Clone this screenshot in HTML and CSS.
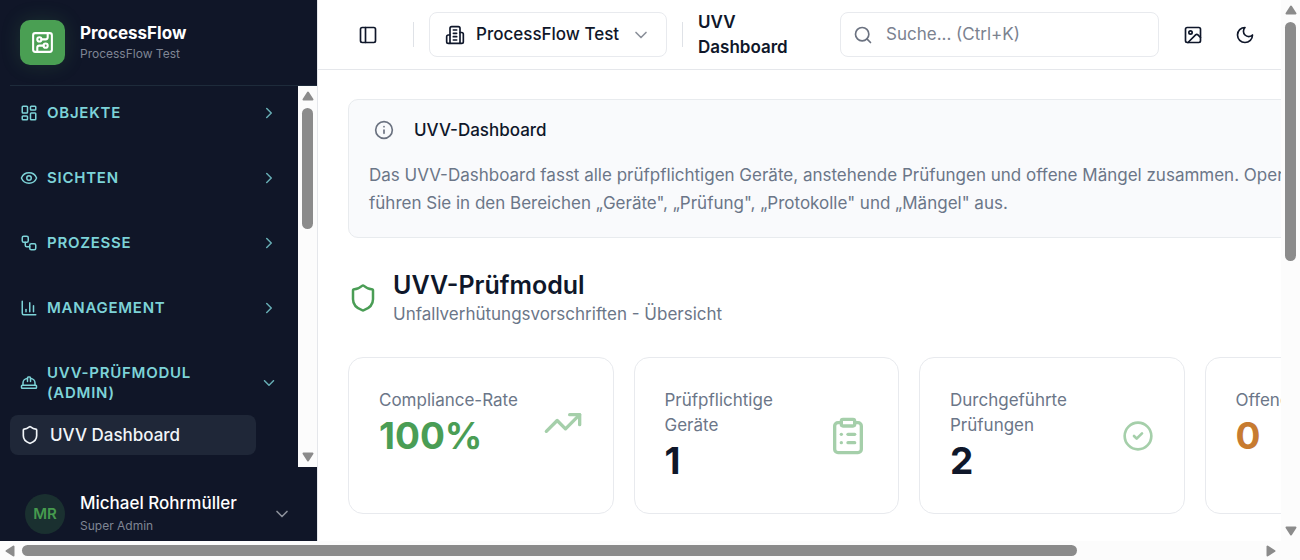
FILE: index.html
```
<!DOCTYPE html>
<html lang="de">
<head>
    <meta charset="UTF-8">
    <title>UVV Dashboard - ProcessFlow</title>
    <link rel="stylesheet" href="styles.css">
</head>
<body>
<div class="window">
    <div class="viewport">
        <div class="app">
            <aside class="sidebar">
                <div class="brand">
                    <div class="brand-logo">
                        <svg class="icon icon-lg" viewBox="0 0 24 24"><rect x="3" y="3" width="18" height="18" rx="2"/><path d="M11 9h4a2 2 0 0 0 2-2V3"/><circle cx="9" cy="9" r="2"/><path d="M7 21v-4a2 2 0 0 1 2-2h4"/><circle cx="15" cy="15" r="2"/></svg>
                    </div>
                    <div>
                        <div class="brand-name">ProcessFlow</div>
                        <div class="small">ProcessFlow Test</div>
                    </div>
                </div>

                <div class="nav-scroll">
                    <nav class="nav">
                        <button class="nav-group">
                            <svg class="icon" viewBox="0 0 24 24"><rect x="3" y="3" width="7" height="9" rx="1"/><rect x="14" y="3" width="7" height="5" rx="1"/><rect x="14" y="12" width="7" height="9" rx="1"/><rect x="3" y="16" width="7" height="5" rx="1"/></svg>
                            <span>Objekte</span>
                            <svg class="icon chevron" viewBox="0 0 24 24"><path d="m9 18 6-6-6-6"/></svg>
                        </button>
                        <button class="nav-group">
                            <svg class="icon" viewBox="0 0 24 24"><path d="M2.06 12.35a1 1 0 0 1 0-.7 10.75 10.75 0 0 1 19.88 0 1 1 0 0 1 0 .7 10.75 10.75 0 0 1-19.88 0"/><circle cx="12" cy="12" r="3"/></svg>
                            <span>Sichten</span>
                            <svg class="icon chevron" viewBox="0 0 24 24"><path d="m9 18 6-6-6-6"/></svg>
                        </button>
                        <button class="nav-group">
                            <svg class="icon" viewBox="0 0 24 24"><rect x="3" y="3" width="8" height="8" rx="2"/><path d="M7 11v4a2 2 0 0 0 2 2h4"/><rect x="13" y="13" width="8" height="8" rx="2"/></svg>
                            <span>Prozesse</span>
                            <svg class="icon chevron" viewBox="0 0 24 24"><path d="m9 18 6-6-6-6"/></svg>
                        </button>
                        <button class="nav-group">
                            <svg class="icon" viewBox="0 0 24 24"><path d="M3 3v16a2 2 0 0 0 2 2h16"/><path d="M18 17V9"/><path d="M13 17V5"/><path d="M8 17v-3"/></svg>
                            <span>Management</span>
                            <svg class="icon chevron" viewBox="0 0 24 24"><path d="m9 18 6-6-6-6"/></svg>
                        </button>
                        <div>
                            <button class="nav-group">
                                <svg class="icon" viewBox="0 0 24 24"><path d="M10 10V5a1 1 0 0 1 1-1h2a1 1 0 0 1 1 1v5"/><path d="M14 6a6 6 0 0 1 6 6v3"/><path d="M4 15v-3a6 6 0 0 1 6-6"/><rect x="2" y="15" width="20" height="4" rx="1"/></svg>
                                <span>UVV-Prüfmodul (Admin)</span>
                                <svg class="icon chevron" viewBox="0 0 24 24"><path d="m6 9 6 6 6-6"/></svg>
                            </button>
                            <a href="#" class="nav-item active">
                                <svg class="icon icon-md" viewBox="0 0 24 24"><path d="M20 13c0 5-3.500 7.500-7.660 8.950a1 1 0 0 1-.67-.01C7.500 20.500 4 18 4 13V6a1 1 0 0 1 1-1c2 0 4.500-1.200 6.240-2.720a1.170 1.170 0 0 1 1.520 0C14.510 3.810 17 5 19 5a1 1 0 0 1 1 1z"/></svg>
                                UVV Dashboard
                            </a>
                        </div>
                    </nav>
                    <div class="scrollbar">
                        <svg class="arrow" viewBox="0 0 12 12"><path d="M6 2.500 10.500 9.500h-9z"/></svg>
                        <div class="track"><div class="thumb" style="height: 36%"></div></div>
                        <svg class="arrow" viewBox="0 0 12 12"><path d="M6 9.500 10.500 2.500h-9z"/></svg>
                    </div>
                </div>

                <button class="user">
                    <span class="avatar">MR</span>
                    <span class="user-text">
                        <span class="user-name">Michael Rohrmüller</span>
                        <span class="small">Super Admin</span>
                    </span>
                    <svg class="icon icon-md" viewBox="0 0 24 24"><path d="m6 9 6 6 6-6"/></svg>
                </button>
            </aside>

            <div class="main">
                <header class="topbar">
                    <button class="icon-btn toggle" aria-label="Sidebar umschalten">
                        <svg class="icon icon-md" viewBox="0 0 24 24"><rect x="3" y="3" width="18" height="18" rx="2"/><path d="M9 3v18"/></svg>
                    </button>
                    <div class="divider divider-first"></div>
                    <div class="tenant">
                        <svg class="icon icon-md" viewBox="0 0 24 24"><path d="M6 22V4a2 2 0 0 1 2-2h8a2 2 0 0 1 2 2v18Z"/><path d="M6 12H4a2 2 0 0 0-2 2v6a2 2 0 0 0 2 2h2"/><path d="M18 9h2a2 2 0 0 1 2 2v9a2 2 0 0 1-2 2h-2"/><path d="M10 6h4"/><path d="M10 10h4"/><path d="M10 14h4"/><path d="M10 18h4"/></svg>
                        <select aria-label="Mandant">
                            <option>ProcessFlow Test</option>
                        </select>
                        <svg class="icon icon-md muted" viewBox="0 0 24 24"><path d="m6 9 6 6 6-6"/></svg>
                    </div>
                    <div class="divider"></div>
                    <div class="page-title">UVV Dashboard</div>
                    <label class="search">
                        <svg class="icon icon-md" viewBox="0 0 24 24"><circle cx="11" cy="11" r="8"/><path d="m21 21-4.300-4.300"/></svg>
                        <input type="text" placeholder="Suche... (Ctrl+K)" aria-label="Suche">
                    </label>
                    <button class="icon-btn" aria-label="Hintergrund">
                        <svg class="icon icon-md" viewBox="0 0 24 24"><rect x="3" y="3" width="18" height="18" rx="2"/><circle cx="9" cy="9" r="2"/><path d="m21 15-3.090-3.090a2 2 0 0 0-2.820 0L6 21"/></svg>
                    </button>
                    <button class="icon-btn" aria-label="Dunkles Design">
                        <svg class="icon icon-md" viewBox="0 0 24 24"><path d="M12 3a6 6 0 0 0 9 9 9 9 0 1 1-9-9Z"/></svg>
                    </button>
                </header>

                <main class="content">
                    <section class="notice">
                        <div class="notice-head">
                            <svg class="icon icon-md" viewBox="0 0 24 24"><circle cx="12" cy="12" r="10"/><path d="M12 16v-4"/><path d="M12 8h.01"/></svg>
                            UVV-Dashboard
                        </div>
                        <p>Das UVV-Dashboard fasst alle prüfpflichtigen Geräte, anstehende Prüfungen und offene Mängel zusammen. Operative Maßnahmen führen Sie in den Bereichen „Geräte", „Prüfung", „Protokolle" und „Mängel" aus.</p>
                    </section>

                    <div class="module">
                        <svg class="icon green" viewBox="0 0 24 24"><path d="M20 13c0 5-3.500 7.500-7.660 8.950a1 1 0 0 1-.67-.01C7.500 20.500 4 18 4 13V6a1 1 0 0 1 1-1c2 0 4.500-1.200 6.240-2.720a1.170 1.170 0 0 1 1.520 0C14.510 3.810 17 5 19 5a1 1 0 0 1 1 1z"/></svg>
                        <div>
                            <h1>UVV-Prüfmodul</h1>
                            <p>Unfallverhütungsvorschriften - Übersicht</p>
                        </div>
                    </div>

                    <div class="cards">
                        <div class="card">
                            <div class="card-row">
                                <div>
                                    <div class="card-label">Compliance-Rate</div>
                                    <div class="card-value green">100%</div>
                                </div>
                                <svg class="icon card-icon" viewBox="0 0 24 24"><path d="M22 7 13.500 15.500l-5-5L2 17"/><path d="M16 7h6v6"/></svg>
                            </div>
                        </div>
                        <div class="card">
                            <div class="card-row">
                                <div>
                                    <div class="card-label">Prüfpflichtige Geräte</div>
                                    <div class="card-value">1</div>
                                </div>
                                <svg class="icon card-icon" viewBox="0 0 24 24"><rect x="8" y="2" width="8" height="4" rx="1"/><path d="M16 4h2a2 2 0 0 1 2 2v14a2 2 0 0 1-2 2H6a2 2 0 0 1-2-2V6a2 2 0 0 1 2-2h2"/><path d="M12 11h4"/><path d="M12 16h4"/><path d="M8 11h.01"/><path d="M8 16h.01"/></svg>
                            </div>
                        </div>
                        <div class="card">
                            <div class="card-row">
                                <div>
                                    <div class="card-label">Durchgeführte Prüfungen</div>
                                    <div class="card-value">2</div>
                                </div>
                                <svg class="icon card-icon card-icon-sm" viewBox="0 0 24 24"><circle cx="12" cy="12" r="10"/><path d="m9 12 2 2 4-4"/></svg>
                            </div>
                        </div>
                        <div class="card">
                            <div class="card-row">
                                <div>
                                    <div class="card-label">Offene Mängel</div>
                                    <div class="card-value orange">0</div>
                                </div>
                            </div>
                        </div>
                    </div>
                </main>
            </div>
        </div>
    </div>

    <div class="scrollbar">
        <svg class="arrow" viewBox="0 0 12 12"><path d="M6 2.500 10.500 9.500h-9z"/></svg>
        <div class="track"><div class="thumb" style="height: 48%"></div></div>
        <svg class="arrow" viewBox="0 0 12 12"><path d="M6 9.500 10.500 2.500h-9z"/></svg>
    </div>
    <div class="scrollbar horizontal">
        <svg class="arrow" viewBox="0 0 12 12"><path d="M2.500 6 9.500 1.500v9z"/></svg>
        <div class="track"><div class="thumb" style="width: 85.300%"></div></div>
        <svg class="arrow" viewBox="0 0 12 12"><path d="M9.500 6 2.500 1.500v9z"/></svg>
    </div>
</div>
</body>
</html>
```
FILE: styles.css
```
* {
    box-sizing: border-box;
}

html, body {
    height: 100%;
    margin: 0;
    padding: 0;
}

body {
    font-family: Inter, "Liberation Sans", sans-serif;
    font-size: 17px;
    line-height: 25px;
    color: #0f172a;
    background: #fff;
}

button, input, select {
    font: inherit;
    color: inherit;
    border: none;
    background: none;
    padding: 0;
    margin: 0;
}

button {
    cursor: pointer;
    text-align: left;
}

h1, p {
    margin: 0;
}

/* window with its scrollbars */
.window {
    display: grid;
    grid-template-columns: minmax(0, 1fr) 19px;
    grid-template-rows: minmax(0, 1fr) 19px;
    height: 100vh;
    background: #fcfcfc;
}

.viewport {
    overflow: hidden;
    background: #fff;
}

.app {
    display: flex;
    min-width: 1500px;
    height: 100%;
}

.scrollbar {
    display: flex;
    flex-direction: column;
    align-items: center;
    flex: none;
    width: 19px;
    padding: 4px 0;
    gap: 6px;
    background: #fcfcfc;
}

.scrollbar.horizontal {
    flex-direction: row;
    width: auto;
    padding: 0 4px;
}

.arrow {
    width: 12px;
    height: 12px;
    flex: none;
    fill: #8b8b8b;
    stroke: #8b8b8b;
    stroke-width: 2;
    stroke-linejoin: round;
}

.track {
    flex: 1;
    width: 11px;
}

.thumb {
    height: 11px;
    border-radius: 6px;
    background: #8b8b8b;
}

/* icons */
.icon {
    width: 18px;
    height: 18px;
    flex: none;
    fill: none;
    stroke: currentColor;
    stroke-width: 2;
    stroke-linecap: round;
    stroke-linejoin: round;
}

.icon-md {
    width: 20px;
    height: 20px;
}

.icon-lg {
    width: 25px;
    height: 25px;
}

.muted {
    color: #8b909a;
}

.green {
    color: #4a9d55;
}

.orange {
    color: #c77b30;
}

/* sidebar */
.sidebar {
    display: flex;
    flex-direction: column;
    width: 318px;
    flex: none;
    color: #fff;
    background: #101628;
    border-right: 1px solid #e5e7eb;
}

.brand {
    display: flex;
    align-items: center;
    gap: 15px;
    height: 86px;
    margin-left: 10px;
    padding-left: 10px;
    border-bottom: 1px solid #1e2b3b;
}

.brand-logo {
    display: flex;
    align-items: center;
    justify-content: center;
    width: 45px;
    height: 45px;
    border-radius: 10px;
    background: #4a9f53;
    box-shadow: 0 0 20px rgba(74, 159, 83, 0.2);
}

.brand-name {
    font-weight: 700;
    line-height: 22px;
}

.small {
    font-size: 12px;
    line-height: 20px;
    color: #7f8594;
}

.nav-scroll {
    display: flex;
    flex: 1;
    min-height: 0;
}

.nav {
    display: flex;
    flex-direction: column;
    gap: 25px;
    flex: 1;
    padding: 7px 10px 0;
}

.nav-group {
    display: flex;
    align-items: center;
    gap: 9px;
    width: 100%;
    padding: 10px;
    font-size: 15px;
    font-weight: 600;
    line-height: 20px;
    letter-spacing: 0.05em;
    text-transform: uppercase;
    color: #7dd3d8;
}

.nav-group span {
    flex: 1;
}

.chevron {
    opacity: 0.8;
}

.nav-item {
    display: flex;
    align-items: center;
    gap: 10px;
    height: 40px;
    margin: 2px 32px 0 0;
    padding: 0 10px;
    border-radius: 8px;
    font-weight: 500;
    color: #f1f5f9;
    text-decoration: none;
}

.nav-item.active {
    background: #1f2738;
}

.user {
    display: flex;
    align-items: center;
    gap: 15px;
    padding: 24px 25px 5px;
    color: #fff;
}

.avatar {
    display: flex;
    align-items: center;
    justify-content: center;
    width: 40px;
    height: 40px;
    border-radius: 50%;
    font-size: 15px;
    font-weight: 600;
    color: #469a4e;
    background: #1a3030;
}

.user-text {
    display: flex;
    flex-direction: column;
    flex: 1;
}

.user-name {
    font-weight: 500;
}

.user .icon {
    color: #8b909a;
}

/* top bar */
.main {
    flex: 1;
    min-width: 0;
}

.topbar {
    display: flex;
    align-items: center;
    gap: 15px;
    height: 70px;
    padding: 0 28px;
    border-bottom: 1px solid #e5e7eb;
}

.icon-btn {
    display: flex;
    align-items: center;
    justify-content: center;
    width: 37px;
    height: 44px;
}

.toggle {
    width: 44px;
}

.divider {
    width: 1px;
    height: 25px;
    background: #dfe2e7;
}

.divider-first {
    margin-left: 8px;
}

.tenant, .search {
    display: flex;
    align-items: center;
    height: 45px;
    border: 1px solid #e8eaee;
    border-radius: 8px;
}

.tenant {
    gap: 11px;
    padding: 0 15px;
    font-weight: 500;
}

.tenant select {
    appearance: none;
    cursor: pointer;
}

.page-title {
    width: 127px;
    font-weight: 600;
}

.search {
    gap: 13px;
    width: 319px;
    padding: 0 12px;
    color: #6b7280;
}

.search input {
    flex: 1;
    min-width: 0;
    outline: none;
}

.search input::placeholder {
    color: #7b8290;
}

/* content */
.content {
    display: flex;
    flex-direction: column;
    gap: 30px;
    padding: 30px;
    padding-top: 29px;
}

.notice {
    padding: 15px 20px 20px;
    border: 1px solid #e8ebee;
    border-radius: 10px;
    background: #f9fafc;
}

.notice-head {
    display: flex;
    align-items: center;
    gap: 20px;
    height: 30px;
    padding-left: 5px;
    font-weight: 500;
}

.notice-head .icon {
    color: #6b7280;
}

.notice p {
    margin-top: 16px;
    line-height: 28px;
    color: #6b7688;
}

.module {
    display: flex;
    align-items: center;
    gap: 15px;
}

.module .icon {
    width: 30px;
    height: 30px;
}

.module h1 {
    font-size: 25px;
    font-weight: 600;
    line-height: 34px;
}

.module p {
    color: #6b7688;
}

.cards {
    display: grid;
    grid-template-columns: repeat(4, 1fr);
    gap: 20px;
}

.card {
    padding: 30px;
    border: 1px solid #e8eaee;
    border-radius: 15px;
}

.card-row {
    display: flex;
    align-items: center;
    justify-content: space-between;
    gap: 15px;
}

.card-label {
    color: #6b7688;
}

.card-value {
    font-size: 37px;
    font-weight: 700;
    line-height: 45px;
}

.card-icon {
    width: 40px;
    height: 40px;
    color: #a5cfaa;
}

.card-icon-sm {
    width: 32px;
    height: 32px;
}
```
